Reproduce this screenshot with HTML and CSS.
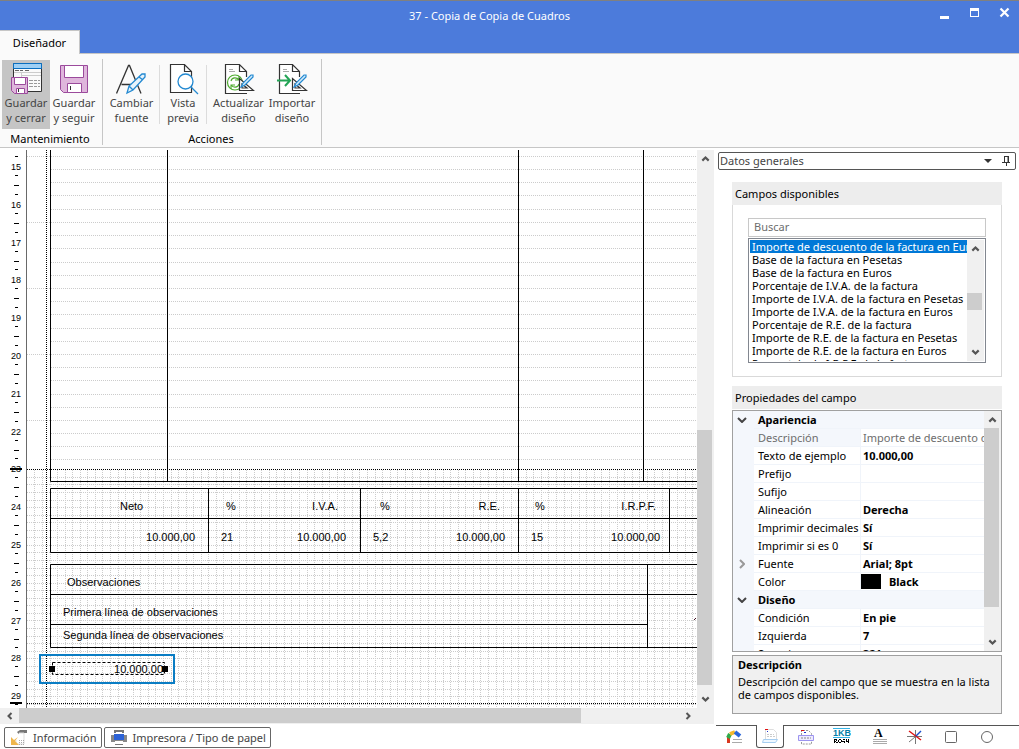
FILE: index.html
```html
<!DOCTYPE html>
<html lang="es">
<head>
<meta charset="utf-8">
<title>37 - Copia de Copia de Cuadros</title>
<link rel="stylesheet" href="styles.css">
</head>
<body>
<div class="app">
  <header class="titlebar">
    <h1 class="title">37 - Copia de Copia de Cuadros</h1>
    <div class="window-controls">
      <button type="button" class="window-button" aria-label="Minimizar"><svg width="12" height="12"><path d="M1 9h9v3H1z" fill="#fff"/></svg></button>
      <button type="button" class="window-button" aria-label="Maximizar"><svg width="12" height="12"><path fill-rule="evenodd" d="M1 1h9v9H1zM2 4v5h7V4z" fill="#fff"/></svg></button>
      <button type="button" class="window-button" aria-label="Cerrar"><svg width="12" height="12"><path d="M1.500 1.500l8 8M9.500 1.500l-8 8" stroke="#fff" stroke-width="2.200"/></svg></button>
    </div>
  </header>
  <nav class="tabs"><button type="button" class="tab">Diseñador</button></nav>

  <section class="ribbon" aria-label="Diseñador">
    <div class="ribbon-group">
      <div class="ribbon-items">
        <button type="button" class="tool tool-active">
          <svg width="32" height="32"><path d="M3.500.500h28v28h-28z" fill="#fafafa" stroke="#333"/><path d="M3.500.500h28v5h-28z" fill="#9fd0f5" stroke="#0b6fc0"/><path d="M5 7.500h4M10 7.500h3M15 7.500h4" stroke="#666"/><path d="M4 9.500h27M11.500 9.500v5M11 12.500h20" stroke="#ccc"/><path d="M19 17.500h4M24 17.500h3M28 17.500h2M19 20.500h4M24 20.500h3M28 20.500h2M19 23.500h4M24 23.500h3M28 23.500h2" stroke="#999"/><path d="M1.500 14.500h16v16h-13l-3-3z" fill="#dfb6dc" stroke="#9b4a9c"/><path d="M4.500 14.500h11v7h-11zM6.500 25.500h8v5h-8z" fill="#fff" stroke="#9b4a9c"/><path d="M8.500 26v3" stroke="#333"/></svg>
          <span>Guardar<br>y cerrar</span>
        </button>
        <button type="button" class="tool">
          <svg width="32" height="32"><path d="M2.500 2.500h27v27h-24l-3-3z" fill="#dfb6dc" stroke="#9b4a9c"/><path d="M6.500 2.500h19v12h-19zM9.500 20.500h14v9h-14z" fill="#fff" stroke="#9b4a9c"/><path d="M12.500 23v4" stroke="#333"/></svg>
          <span>Guardar<br>y seguir</span>
        </button>
      </div>
      <h2 class="group-name">Mantenimiento</h2>
    </div>
    <div class="ribbon-group">
      <div class="ribbon-items">
        <button type="button" class="tool tool-medium">
          <svg width="32" height="32"><path d="M.500 30.500L12.500 2.500h1L25 30.500M5.500 21.500h16" fill="none" stroke="#333" stroke-width="1.300"/><path d="M11 30l2-7L26 11l3 0v3L17 27zM13 23l4 4M23 14l4 3" fill="#e7f3fb" stroke="#2389d1" stroke-width="1.300"/></svg>
          <span>Cambiar<br>fuente</span>
        </button>
        <span class="divider"></span>
        <button type="button" class="tool tool-small">
          <svg width="32" height="32"><path d="M3.500 1.500h14l7 7v21h-21zM17.500 1.500v7h7" fill="#fff" stroke="#333" stroke-width="1.200"/><circle cx="18.500" cy="18.500" r="7.500" fill="#fff" stroke="#2389d1" stroke-width="1.300"/><path d="M24 24l7 7" stroke="#2389d1" stroke-width="1.300"/></svg>
          <span>Vista<br>previa</span>
        </button>
        <span class="divider"></span>
        <button type="button" class="tool tool-wide">
          <svg width="32" height="32"><path d="M23.500 14V8.500l-7-7h-14v29H24M16.500 1.500v7h7" fill="#fff" stroke="#333" stroke-width="1.200"/><path d="M6 6.500h4M6 8.500h6" stroke="#aaa"/><g fill="none" stroke="#4eac2f"><circle cx="12" cy="19.500" r="7.500" stroke-width="1.200"/><path d="M8 18c1-4 6-4 8-1M16 13v4h-4M16 21c-1 4-6 4-8 1M8 26v-4h4" stroke-width="1.100"/></g><path d="M16.500 15.500v12h14zM19 21v4h5z" fill="#fff" stroke="#333" stroke-width="1.200"/><path d="M18 24l2-4 8-8h2v2l-8 8z" fill="#d2eafa" stroke="#2389d1" stroke-width="1.200"/></svg>
          <span>Actualizar<br>diseño</span>
        </button>
        <button type="button" class="tool">
          <svg width="32" height="32"><path d="M23.500 14V8.500l-7-7h-13v29H24M16.500 1.500v7h7" fill="#fff" stroke="#333" stroke-width="1.200"/><path d="M7 6.500h4M7 8.500h6" stroke="#aaa"/><path d="M16.500 15.500v12h14zM19 21v4h5z" fill="#fff" stroke="#333" stroke-width="1.200"/><path d="M1 17.500h13M9 12l5 5.500-5 5.500" fill="none" stroke="#23a455" stroke-width="2"/><path d="M18 24l2-4 8-8h2v2l-8 8z" fill="#d2eafa" stroke="#2389d1" stroke-width="1.200"/></svg>
          <span>Importar<br>diseño</span>
        </button>
      </div>
      <h2 class="group-name">Acciones</h2>
    </div>
  </section>

  <main class="workspace">
    <section class="designer" aria-label="Documento">
      <div class="stage">
        <svg class="ruler" id="ruler"></svg>
        <svg class="page" id="page">
          <defs>
            <pattern id="grid-rows" width="2" height="1" patternUnits="userSpaceOnUse"><rect width="1" height="1" fill="#cccccc"/></pattern>
            <pattern id="grid-columns" width="1" height="2" patternUnits="userSpaceOnUse"><rect width="1" height="1" fill="#cccccc"/></pattern>
          </defs>
          <g id="grid" shape-rendering="crispEdges"></g>
          <g class="limits"><path d="M19.500 0v558"/><path d="M0 319.500h2000M0 553.500h2000"/></g>
          <path class="rules" d="M23.500 0v331.500H2000M140.500 0v331M491.500 0v331M616.500 0v331M2000 338.500H23.500v64H2000M23 368.500h1977M181.500 338v64M333.500 338v64M491.500 338v64M642.500 338v64M2000 414.500H23.500v83H2000M23 444.500h1977M23 474.500h597M620.500 414v83"/>
          <g class="fields">
            <text x="93" y="360">Neto</text><text x="199" y="360">%</text><text x="311" y="360" class="end">I.V.A.</text>
            <text x="353" y="360">%</text><text x="473" y="360" class="end">R.E.</text><text x="508" y="360">%</text><text x="629" y="360" class="end">I.R.P.F.</text>
            <text x="168" y="391" class="end">10.000,00</text><text x="194" y="391">21</text><text x="319" y="391" class="end">10.000,00</text><text x="346" y="391">5,2</text>
            <text x="478" y="391" class="end">10.000,00</text><text x="504" y="391">15</text><text x="633" y="391" class="end">10.000,00</text>
            <text x="40" y="436">Observaciones</text><text x="36" y="466">Primera línea de observaciones</text><text x="36" y="489">Segunda línea de observaciones</text>
            <text x="136" y="523" class="end">10.000,00</text>
          </g>
          <path d="M667 469.500h1M668 468.500h1" stroke="#401020"/>
          <rect x="25.500" y="512.500" width="112" height="12" fill="none" stroke="#000" stroke-dasharray="3 2"/>
          <path d="M22 516h6v6h-6zM135 516h6v6h-6z"/>
          <rect x="13" y="505" width="134" height="28" fill="none" stroke="#0a7dc4" stroke-width="2"/>
        </svg>
        <div class="scroll scroll-v">
          <svg class="arrow" viewBox="0 0 16 16"><path d="M5 10l3-3 3 3"/></svg>
          <span class="track"><span class="thumb thumb-document"></span></span>
          <svg class="arrow" viewBox="0 0 16 16"><path d="M5 6l3 3 3-3"/></svg>
        </div>
      </div>
      <div class="scroll scroll-h">
        <svg class="arrow" viewBox="0 0 16 16"><path d="M9 5L6 8l3 3"/></svg>
        <span class="track"><span class="thumb thumb-across"></span></span>
        <svg class="arrow" viewBox="0 0 16 16"><path d="M6 5l3 3-3 3"/></svg>
        <span class="corner"></span>
      </div>
      <footer class="footer">
        <button type="button" class="status"><svg width="18" height="18"><path d="M7 3l3-2h7v3h-6v4" fill="#777"/><path d="M9 4h5v11H6v-4" fill="#fff" stroke="#ddd"/><path d="M9 11.500h6M9 13.500h6M9 15.500h6" stroke="#aaa" stroke-dasharray="1 1"/><path d="M1 8l3 3 4-3-3 4 4 4H1z" fill="#efb64c"/></svg>Información</button>
        <button type="button" class="status"><svg width="18" height="18"><path d="M5 4V2h8v2" fill="none" stroke="#777" stroke-width="2"/><path d="M1 6h16v7H1z" fill="#888"/><path d="M4 5h10v6H4z" fill="#2c62d6"/><path d="M5 12h8v3H5z" fill="#fff"/><path d="M5 15.500h8" stroke="#777"/></svg>Impresora / Tipo de papel</button>
      </footer>
    </section>

    <aside class="side">
      <div class="source">
        <select class="source-select" aria-label="Origen de datos"><option>Datos generales</option></select>
        <svg width="8" height="4"><path d="M0 0h8L4 4z" fill="#333"/></svg>
        <button type="button" class="pin" aria-label="Fijar panel"><svg width="9" height="10"><path d="M2.500 0v6M2 .500h5M6 0v6" stroke="#333" fill="none"/><path d="M6.500 0v6" stroke="#333"/><path d="M0 6.500h8M4.500 6v4" stroke="#333"/></svg></button>
      </div>

      <section class="panel available">
        <h2 class="panel-title"><label for="search">Campos disponibles</label></h2>
        <div class="panel-body">
          <input class="search" id="search" type="text" placeholder="Buscar">
          <div class="listbox">
            <ul class="options" role="listbox" aria-label="Campos disponibles">
              <li class="option option-selected" role="option" aria-selected="true">Importe de descuento de la factura en Euros</li>
              <li class="option" role="option">Base de la factura en Pesetas</li>
              <li class="option" role="option">Base de la factura en Euros</li>
              <li class="option" role="option">Porcentaje de I.V.A. de la factura</li>
              <li class="option" role="option">Importe de I.V.A. de la factura en Pesetas</li>
              <li class="option" role="option">Importe de I.V.A. de la factura en Euros</li>
              <li class="option" role="option">Porcentaje de R.E. de la factura</li>
              <li class="option" role="option">Importe de R.E. de la factura en Pesetas</li>
              <li class="option" role="option">Importe de R.E. de la factura en Euros</li>
              <li class="option" role="option">Porcentaje de I.R.P.F. de la factura</li>
            </ul>
            <div class="scroll scroll-v">
              <svg class="arrow" viewBox="0 0 16 16"><path d="M5 10l3-3 3 3"/></svg>
              <span class="track"><span class="thumb thumb-list"></span></span>
              <svg class="arrow" viewBox="0 0 16 16"><path d="M5 6l3 3 3-3"/></svg>
            </div>
          </div>
        </div>
      </section>

      <section class="panel">
        <h2 class="panel-title">Propiedades del campo</h2>
        <div class="properties">
          <table class="grid">
            <tbody>
              <tr class="category"><td class="gutter"><svg width="10" height="6"><path d="M1 1l4 4 4-4"/></svg></td><th colspan="2">Apariencia</th></tr>
              <tr class="readonly"><td class="gutter"></td><th>Descripción</th><td>Importe de descuento de la factura en Euros</td></tr>
              <tr><td class="gutter"></td><th>Texto de ejemplo</th><td>10.000,00</td></tr>
              <tr><td class="gutter"></td><th>Prefijo</th><td></td></tr>
              <tr><td class="gutter"></td><th>Sufijo</th><td></td></tr>
              <tr><td class="gutter"></td><th>Alineación</th><td>Derecha</td></tr>
              <tr><td class="gutter"></td><th>Imprimir decimales</th><td>Sí</td></tr>
              <tr><td class="gutter"></td><th>Imprimir si es 0</th><td>Sí</td></tr>
              <tr><td class="gutter gutter-closed"><svg width="6" height="10"><path d="M1 1l4 4-4 4"/></svg></td><th>Fuente</th><td>Arial; 8pt</td></tr>
              <tr><td class="gutter"></td><th>Color</th><td class="color"><span class="swatch"></span>Black</td></tr>
              <tr class="category"><td class="gutter"><svg width="10" height="6"><path d="M1 1l4 4 4-4"/></svg></td><th colspan="2">Diseño</th></tr>
              <tr><td class="gutter"></td><th>Condición</th><td>En pie</td></tr>
              <tr><td class="gutter"></td><th>Izquierda</th><td>7</td></tr>
              <tr><td class="gutter"></td><th>Superior</th><td>321</td></tr>
            </tbody>
          </table>
          <div class="scroll scroll-v">
            <svg class="arrow" viewBox="0 0 16 16"><path d="M5 10l3-3 3 3"/></svg>
            <span class="track"><span class="thumb thumb-grid"></span></span>
            <svg class="arrow" viewBox="0 0 16 16"><path d="M5 6l3 3 3-3"/></svg>
          </div>
        </div>
        <div class="help"><h3 class="help-title">Descripción</h3><p class="help-text">Descripción del campo que se muestra en la lista de campos disponibles.</p></div>
      </section>

      <nav class="palette" aria-label="Elementos">
        <button type="button" class="element" aria-label="Gráfico"><svg width="18" height="18"><path d="M3.500 15V9" stroke="#d9381e" stroke-width="3"/><path d="M3 10l2-4" stroke="#2faa4a" stroke-width="4"/><path d="M5 6l5-2" stroke="#f4b92c" stroke-width="4"/><path d="M10 4l5 4" stroke="#2a66d9" stroke-width="4"/><path d="M8 11.500h9M7 14.500h10" stroke="#aaa"/></svg></button>
        <button type="button" class="element element-active" aria-label="Cabecera"><svg width="18" height="18"><path d="M4.500 13V2.500h8l3 3V13" fill="#fff" stroke="#ddd"/><path d="M4 2.500h3" stroke="#e01010"/><path d="M6 4.500h1" stroke="#2030d0"/><path d="M6 7.500h7M6 9.500h8" stroke="#ccc" stroke-dasharray="2 1"/><path d="M2.500 12.500h14l-2 3H1.500z" fill="#eef7ff" stroke="#a5cdf0"/></svg></button>
        <button type="button" class="element" aria-label="Líneas"><svg width="18" height="18"><path d="M4.500 16V2.500h7l3 3V16z" fill="#fff" stroke="#999" stroke-dasharray="2 1"/><path d="M4 2.500h3" stroke="#e01010"/><path d="M7 4.500h2" stroke="#2030d0"/><path d="M1.500 7.500h15v5h-15z" fill="#edeaff" stroke="#9c94ef"/><path d="M4 10h10" stroke="#888" stroke-dasharray="2 1"/></svg></button>
        <button type="button" class="element" aria-label="Campo"><svg width="18" height="18"><path d="M0 .500h17M0 9.500h17" stroke="#35b3e5"/><text x="0" y="8" class="kb">1KB</text><path d="M1 11h3v1H1zM1 12h1v3H1zM3 12h1v1H3zM2 13h1v1H2zM3 14h2v1H3zM6 11h2v1H6zM5 12h1v2H5zM8 12h1v2H8zM6 14h2v1H6zM10 11h2v1h-2zM9 13h3v1H9zM11 14h1v1h-1zM13 11h1v2h-1zM13 13h3v1h-3zM15 11h1v4h-1z"/></svg></button>
        <button type="button" class="element" aria-label="Texto"><svg width="18" height="18"><text x="4" y="9" class="letter">A</text><path d="M3 11.500h14M3 13.500h14M3 15.500h14" stroke="#aaa"/></svg></button>
        <button type="button" class="element" aria-label="Línea"><svg width="18" height="18"><path d="M1 8.500h15M9.500 2v14" stroke="#777"/><path d="M3 3l12 9" stroke="#e01010" stroke-width="1.400"/><path d="M15 3l-5 5" stroke="#1b50cf" stroke-width="1.400"/><path d="M9 9l-6 5" stroke="#777"/></svg></button>
        <button type="button" class="element" aria-label="Rectángulo"><svg width="18" height="18"><rect x="3.500" y="3.500" width="11" height="11" rx="1" fill="#fff" stroke="#666"/></svg></button>
        <button type="button" class="element" aria-label="Elipse"><svg width="18" height="18"><circle cx="9" cy="9" r="5.500" fill="#fff" stroke="#666"/></svg></button>
      </nav>
    </aside>
  </main>
</div>
<script src="designer.js"></script>
</body>
</html>
```
FILE: styles.css
```css
* { box-sizing: border-box; }
body { margin: 0; font: 11px/14px "Noto Sans", sans-serif; color: #000; background: #fff; }
button, input, select { font: inherit; color: inherit; margin: 0; padding: 0; border: 0; background: none; border-radius: 0; }
h1, h2, h3, p, ul { margin: 0; padding: 0; font-size: inherit; font-weight: 400; }
svg { display: block; flex: none; }
.app { display: flex; flex-direction: column; height: 100vh; }

.titlebar { height: 30px; display: flex; align-items: center; background: #4c7bdb; border-top: 1px solid #808080; color: #fff; }
.title { flex: 1; text-align: center; padding-left: 40px; }
.window-controls { display: flex; gap: 18px; padding: 0 8px 6px 0; }
.window-button { width: 12px; height: 12px; }
.tabs { height: 24px; background: #4c7bdb; border-bottom: 1px solid #c6c6c6; display: flex; }
.tab { width: 80px; height: 24px; background: #fafafa; border: solid #c6c6c6; border-width: 1px 1px 0 0; }

.ribbon { display: flex; background: #fafafa; border-bottom: 1px solid #c6c6c6; padding: 5px 0 2px; }
.ribbon-group { display: flex; flex-direction: column; border-right: 1px solid #c6c6c6; padding: 1px 4px 0 2px; }
.ribbon-group + .ribbon-group { padding: 1px 5px 0 3px; }
.ribbon-items { display: flex; }
.group-name { text-align: center; padding-top: 4px; line-height: 12px; }
.tool { width: 48px; height: 69px; display: flex; flex-direction: column; align-items: center; padding-top: 3px; color: #444; line-height: 15px; justify-content: flex-start; }
.tool-active { background: #c5c5c5; }
.tool-medium { width: 51px; }
.tool-small { width: 42px; }
.tool-wide { width: 59px; }
.divider { width: 1px; height: 59px; margin: 5px 2px 0; background: #dcdcdc; }

.workspace { flex: 1; min-height: 0; display: flex; padding-top: 2px; }
.designer { flex: 1; min-width: 0; display: flex; flex-direction: column; }
.stage { flex: 1; min-height: 0; display: flex; }
.ruler { width: 27px; height: 100%; border-right: 1px solid #696969; font: 9px "Liberation Sans", sans-serif; }
.page { flex: 1; min-width: 0; height: 100%; font: 11px "Liberation Sans", sans-serif; overflow: hidden; }
.limits { fill: none; stroke: #000; stroke-dasharray: 1 1; }
.rules { fill: none; stroke: #000; }
.end { text-anchor: end; }

.scroll { flex: none; display: flex; background: #f0f0f0; }
.scroll-v { width: 17px; flex-direction: column; }
.scroll-h { height: 16px; }
.arrow { width: 17px; height: 17px; fill: none; stroke: #555; stroke-width: 2; }
.scroll-h .arrow { height: 16px; }
.track { flex: 1; min-height: 0; display: flex; }
.scroll-v .track { flex-direction: column; }
.thumb { background: #cdcdcd; }
.scroll-v .thumb { width: 15px; }
.scroll-h .thumb { height: 15px; }
.thumb-document { height: 255px; margin-top: auto; margin-bottom: 6px; }
.thumb-across { width: 85%; }
.thumb-list { height: 17px; margin-top: 36px; }
.thumb-grid { height: 179px; }
.corner { width: 17px; }
.scroll-h .arrow:first-child { margin-left: 2px; }

.footer { height: 25px; display: flex; gap: 2px; padding: 3px 4px 1px; }
.status { display: flex; align-items: center; gap: 5px; border: 1px solid #666; border-radius: 2px; padding: 0 4px 0 5px; color: #444; }

.side { width: 305px; display: flex; flex-direction: column; padding-left: 2px; }
.source { display: flex; align-items: center; gap: 10px; height: 18px; margin: 2px 3px 12px 2px; padding-right: 4px; border: 1px solid #555; border-radius: 2px; color: #444; }
.source-select { flex: 1; appearance: none; padding-left: 1px; height: 16px; line-height: 16px; }
.pin { width: 9px; height: 10px; }
.panel { margin: 0 17px 10px 16px; }
.available { margin-bottom: 9px; }
.panel-title { height: 23px; line-height: 23px; padding-left: 3px; background: #ededed; }
.panel-body { border: 1px solid #d9d9d9; border-top: 0; padding: 13px 15px; }
.search { display: block; width: 100%; height: 19px; border: 1px solid #c8c8c8; padding: 0 5px 2px; margin-bottom: 1px; }
.search::placeholder { color: #6d6d6d; opacity: 1; }
.listbox { display: flex; height: 125px; border: 1px solid #828790; padding: 1px; }
.options { flex: 1; min-width: 0; list-style: none; overflow: hidden; }
.option { height: 13px; line-height: 13px; padding-left: 2px; white-space: nowrap; overflow: hidden; }
.option-selected { background: #0078d7; color: #fff; }

.properties { display: flex; height: 242px; margin-top: 1px; border: 1px solid #a0a0a0; overflow: hidden; }
.grid { flex: 1; min-width: 0; display: block; overflow: hidden; border-collapse: collapse; background: #f4f7fc; }
.grid tbody { display: block; }
.grid tr { display: grid; grid-template-columns: 21px 106px 1fr; height: 18px; line-height: 17px; background: #fff; }
.grid th, .grid td { padding: 0 0 0 4px; text-align: left; font-weight: 400; white-space: nowrap; overflow: hidden; border-bottom: 1px solid #f0f4fa; }
.grid td { font-weight: 700; padding-left: 2px; border-left: 1px solid #f0f4fa; }
.grid .gutter { display: flex; align-items: center; justify-content: center; padding: 0 3px 0 0; background: #f4f7fc; border: 0; fill: none; stroke: #444; stroke-width: 2; }
.grid .gutter-closed { stroke: #999; }
.grid .category { background: #f4f7fc; }
.grid .category th { grid-column: 2 / 4; font-weight: 700; }
.grid .readonly th, .grid .readonly td { font-weight: 400; color: #6d6d6d; }
.grid .readonly th { background: #f4f7fc; }
.grid .color { display: flex; align-items: center; gap: 8px; padding-left: 0; }
.swatch { width: 20px; height: 15px; background: #000; }

.help { height: 59px; margin-top: 3px; border: 1px solid #a0a0a0; background: #f0f0f0; padding: 1px 5px; line-height: 13px; }
.help-title { font-weight: 700; line-height: 16px; margin-bottom: 2px; }

.palette { display: grid; grid-template-columns: repeat(8, 1fr); justify-items: center; margin-top: auto; height: 24px; border-top: 1px solid #555; padding: 0 14px 0 0; }
.element { width: 28px; height: 22px; display: flex; justify-content: center; align-items: center; }
.element-active { background: #fff; margin-top: -1px; height: 23px; border: solid #555; border-width: 0 1px 1px; border-radius: 0 0 3px 3px; }
.kb { font: 700 9px "Liberation Sans", sans-serif; fill: #087fa8; }
.letter { font: 700 12px "Liberation Serif", serif; }
```
FILE: designer.js
```js
const NS = "http://www.w3.org/2000/svg";

function add(parent, name, attrs, text) {
  const node = document.createElementNS(NS, name);
  for (const key in attrs) node.setAttribute(key, attrs[key]);
  if (text !== undefined) node.textContent = text;
  parent.appendChild(node);
}

const CM = 96 / 2.54;
const ruler = document.getElementById("ruler");
const grid = document.getElementById("grid");

// Ruler: a number each centimetre, ticks at the quarters and halves.
for (let cm = 15; cm <= 29; cm++) {
  const y = 17 + (cm - 15) * CM;
  add(ruler, "text", { x: 16, y: Math.round(y + 3), "text-anchor": "middle" }, cm);
  add(ruler, "rect", { x: 15, y: Math.round(y - 11), width: 3, height: 1 });
  add(ruler, "rect", { x: 15, y: Math.round(y + 8), width: 3, height: 1 });
  add(ruler, "rect", { x: 14, y: Math.round(y + 18), width: 5, height: 1 });
}
add(ruler, "rect", { x: 10, y: 318, width: 12, height: 2 });
add(ruler, "rect", { x: 10, y: 552, width: 12, height: 2 });

// Detail section: dotted line for each row of text, up to the footer limit.
for (let row = 0; row < 24; row++) {
  const full = row % 5 === 0;
  add(grid, "rect", { x: full ? 0 : 24, y: Math.floor(6.4 + row * 13.2), width: 2000, height: 1, fill: "url(#grid-rows)" });
}

// Footer section: a 2 mm grid.
const step = CM / 5;
for (let i = 1; i < 32; i++) {
  add(grid, "rect", { x: 0, y: Math.floor(319.8 + i * step), width: 2000, height: 1, fill: "url(#grid-rows)" });
}
for (let i = 1; i < 260; i++) {
  add(grid, "rect", { x: Math.floor(0.4 + i * step), y: 320, width: 1, height: 240, fill: "url(#grid-columns)" });
}
```
